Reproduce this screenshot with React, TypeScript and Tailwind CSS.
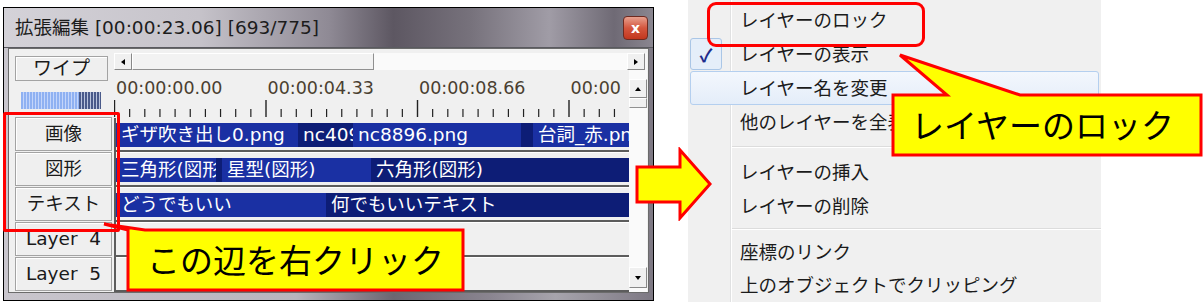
import React from 'react';

const jp = "font-['DejaVu_Sans','Noto_Sans_CJK_JP',sans-serif]";
const jpOnly = "font-['Noto_Sans_CJK_JP','Noto_Sans',sans-serif]";

type Clip = { w: number; label: string; dark?: boolean };

const tracks: Clip[][] = [
  [
    { w: 182, label: 'ギザ吹き出し0.png' },
    { w: 55, label: 'nc4096.png', dark: true },
    { w: 168, label: 'nc8896.png' },
    { w: 12, label: '', dark: true },
    { w: 98, label: '台詞_赤.png' },
  ],
  [
    { w: 100, label: '三角形(図形)' },
    { w: 6, label: '', dark: true },
    { w: 149, label: '星型(図形)' },
    { w: 260, label: '六角形(図形)', dark: true },
  ],
  [
    { w: 210, label: 'どうでもいい' },
    { w: 305, label: '何でもいいテキスト', dark: true },
  ],
  [],
  [],
];

const layerNames = ['画像', '図形', 'テキスト', 'Layer  4', 'Layer  5'];
const rulerLabels = ['00:00:00.00', '00:00:04.33', '00:00:08.66', '00:00:12.99'];

function Arrow({ dir }: { dir: 'left' | 'right' | 'up' | 'down' }) {
  const pts = {
    left: '6,1 2,4 6,7',
    right: '2,1 6,4 2,7',
    up: '1,6 4,2 7,6',
    down: '1,2 4,6 7,2',
  }[dir];
  return (
    <svg width="8" height="8" viewBox="0 0 8 8">
      <polygon points={pts} fill="#000" />
    </svg>
  );
}

function ScrollButton({ dir, className = '' }: { dir: 'left' | 'right' | 'up' | 'down'; className?: string }) {
  return (
    <div
      className={`flex items-center justify-center bg-[#f0f0f0] border border-t-white border-l-white border-r-[#888] border-b-[#888] ${className}`}
    >
      <Arrow dir={dir} />
    </div>
  );
}

function Ruler() {
  const ticks: React.ReactNode[] = [];
  for (let i = 0; i <= 34; i++) {
    const x = 0.5 + i * 15.15;
    const major = i % 10 === 0;
    ticks.push(<line key={i} x1={x} x2={x} y1={major ? 0 : 9} y2={17} stroke="#222" strokeWidth={major ? 1.4 : 1.2} />);
  }
  return (
    <div className="h-[48px] flex flex-col">
      <div className="flex mt-[7px] h-[23px] w-[507px] pl-[2px] overflow-hidden">
        {rulerLabels.map((t) => (
          <div key={t} className="w-[151.5px] shrink-0 text-[17.5px] leading-[23px] text-[#4a3f30] whitespace-nowrap">
            {t}
          </div>
        ))}
      </div>
      <svg width="515" height="18" className="block">
        {ticks}
      </svg>
    </div>
  );
}

function TrackRow({ clips }: { clips: Clip[] }) {
  return (
    <div className="h-[35px] flex flex-col">
      <div className="mt-[5px] h-[24px] flex overflow-hidden">
        {clips.map((c, i) => (
          <div
            key={i}
            style={{ width: c.w }}
            className={`shrink-0 h-full overflow-hidden whitespace-nowrap pl-[5px] text-[18.5px] leading-[24px] text-white ${
              c.dark ? 'bg-[#0d1d76]' : 'bg-[#1a30a3]'
            }`}
          >
            {c.label}
          </div>
        ))}
      </div>
      <div className="mt-auto h-[2px] bg-[#5c5c5c]" />
      <div className="h-px bg-white" />
    </div>
  );
}

function LayerButton({ name }: { name: string }) {
  return (
    <div className="h-[34px] mb-px w-[97px] flex items-center justify-center bg-[#efefef] border border-[#a3a3a3] shadow-[inset_1px_1px_0_#fff] text-[18.5px] text-[#1a1a1a] whitespace-pre">
      {name}
    </div>
  );
}

function EditWindow() {
  return (
    <div className="mt-[7px] ml-[3px] w-[651px] h-[294px] shrink-0 border border-black flex flex-col bg-[linear-gradient(90deg,#c9c6cd_0%,#b8b4bd_45%,#6c6671_60%,#8a8590_75%,#a7a4ac_85%,#7d7883_100%)]">
      <div className="h-[39px] flex items-center pl-[11px] pr-[5px] bg-[linear-gradient(90deg,#d4d2d8_0%,#c6c3ca_30%,#8f8a95_50%,#5d5762_60%,#77727c_72%,#a09ca6_84%,#6f6a75_94%,#8a8690_100%)]">
        <span className="text-[18.5px] text-[#1c1c1c] whitespace-nowrap">拡張編集 [00:00:23.06] [693/775]</span>
        <div className="ml-auto w-[25px] h-[24px] rounded-[4px] border border-[#6e2a20] bg-[linear-gradient(#e8a08e,#d4563e_50%,#c2371f)] flex items-center justify-center text-white text-[14px] font-bold leading-none">
          x
        </div>
      </div>
      <div className="h-px bg-[#5a5a60]" />
      <div className="flex-1 flex px-[4px] pb-[7px] min-h-0">
        <div className="flex-1 flex bg-[#f0f0f0] border border-[#6b6b6b] overflow-hidden">
          <div className="w-[105px] shrink-0 pl-[6px] flex flex-col">
            <div className="mt-[7px] h-[25px] w-[93px] flex items-center justify-center bg-[#efefef] border border-[#a3a3a3] shadow-[inset_1px_1px_0_#fff] text-[19px] text-[#1a1a1a]">
              ワイプ
            </div>
            <div className="mt-[11px] ml-[6px] h-[18px] w-[80px] flex">
              <div className="w-[58px] bg-[repeating-linear-gradient(90deg,#8fb1f2_0_2px,#c4d5fa_2px_3px)]" />
              <div className="w-[22px] bg-[repeating-linear-gradient(90deg,#4a5a8a_0_2px,#b9c3dc_2px_3px)]" />
            </div>
            <div className="mt-[8px] flex flex-col">
              {layerNames.map((n) => (
                <LayerButton key={n} name={n} />
              ))}
            </div>
          </div>
          <div className="w-[533px] shrink-0 pt-[4px] flex flex-col">
            <div className="h-[17px] flex bg-[#f6f6f6]">
              <ScrollButton dir="left" className="w-[18px]" />
              <div className="w-[242px] bg-[#f2f2f2] border border-t-white border-l-white border-r-[#909090] border-b-[#909090]" />
              <div className="flex-1 bg-[#fafafa]" />
              <ScrollButton dir="right" className="w-[18px] mr-[2px]" />
            </div>
            <div className="flex flex-1 min-h-0">
              <div className="w-[515px] shrink-0 flex flex-col">
                <Ruler />
                <div className="border-l-2 border-[#5c5c5c] flex flex-col">
                  {tracks.map((t, i) => (
                    <TrackRow key={i} clips={t} />
                  ))}
                </div>
              </div>
              <div className="w-[18px] shrink-0 flex flex-col pt-[9px] pb-[4px] bg-[#fafafa]">
                <ScrollButton dir="up" className="h-[19px]" />
                <div className="h-[10px] bg-[#f0f0f0] border border-t-white border-l-white border-r-[#909090] border-b-[#909090]" />
                <div className="flex-1" />
                <ScrollButton dir="down" className="h-[21px]" />
              </div>
            </div>
          </div>
        </div>
      </div>
    </div>
  );
}

type Item = { label: string; checked?: boolean; hover?: boolean; sep?: number; h?: number };

const items: Item[] = [
  { label: 'レイヤーのロック' },
  { label: 'レイヤーの表示', checked: true },
  { label: 'レイヤー名を変更', hover: true },
  { label: '他のレイヤーを全表示' },
  { label: '', sep: 16 },
  { label: 'レイヤーの挿入' },
  { label: 'レイヤーの削除' },
  { label: '', sep: 12 },
  { label: '座標のリンク', h: 33 },
  { label: '上のオブジェクトでクリッピング', h: 33 },
];

function ContextMenu() {
  return (
    <div className={`ml-[34px] w-[413px] h-[302px] shrink-0 pt-[3px] bg-[#f0f0f0] bg-[linear-gradient(90deg,transparent_42px,#e0e1e2_42px,#e0e1e2_43px,#ffffff_43px,#ffffff_44px,transparent_44px)] text-[18.5px] text-[#1b1b1b] ${jpOnly}`}>
      {items.map((it, i) => {
        if (it.sep) {
          return (
            <div key={i} style={{ height: it.sep }} className="flex flex-col justify-center pl-[44px]">
              <div className="h-px bg-[#dcdcdc]" />
              <div className="h-px bg-white" />
            </div>
          );
        }
        if (it.hover) {
          return (
            <div
              key={i}
              className="h-[34px] mx-[2px] flex items-center border border-[#b4cfef] rounded-[3px] bg-[linear-gradient(#f3f7fd,#e4edf9)]"
            >
              <div className="w-[31px]" />
              <span className="ml-[18px] whitespace-nowrap">{it.label}</span>
            </div>
          );
        }
        return (
          <div key={i} style={{ height: it.h ?? 34 }} className="px-[2px] flex items-center">
            <div className="w-[32px] h-[32px] flex items-center justify-center">
              {it.checked && (
                <div className="w-[32px] h-[32px] rounded-[3px] border border-[#aac6e6] bg-[#e5eef9] flex items-center justify-center text-[#1d2c8c] text-[18px] font-bold">
                  ✓
                </div>
              )}
            </div>
            <span className="ml-[18px] whitespace-nowrap">{it.label}</span>
          </div>
        );
      })}
    </div>
  );
}

export default function App() {
  return (
    <div className={`relative w-[1204px] h-[307px] bg-white flex items-start overflow-hidden ${jp}`}>
      <EditWindow />
      <ContextMenu />

      {/* red frame around the layer buttons */}
      <div className="absolute left-[3px] top-[112px] w-[117px] h-[120px] border-[3px] border-[#ff0000] rounded-[2px]" />

      {/* left callout */}
      <div className={`absolute left-[100px] top-[220px] w-[366px] h-[72px] ${jpOnly}`}>
        <svg width="366" height="72" className="absolute inset-0">
          <path d="M28 10 L4 4 L45 10 L363 10 L363 70 L28 70 Z" fill="#ffff00" stroke="#ff0000" strokeWidth="3" strokeLinejoin="miter" />
        </svg>
        <div className="absolute left-[47px] top-[10px] h-[60px] flex items-center text-[33px] text-black whitespace-nowrap">
          この辺を右クリック
        </div>
      </div>

      {/* yellow arrow */}
      <svg width="80" height="74" className="absolute left-[634px] top-[147px]">
        <polygon points="3,20 46,20 46,3 76,37 46,71 46,55 3,55" fill="#ffff00" stroke="#ff0000" strokeWidth="3" />
      </svg>

      {/* red frame around the menu item */}
      <div className="absolute left-[707px] top-[2px] w-[218px] h-[45px] border-[3px] border-[#ff0000] rounded-[9px]" />

      {/* right callout */}
      <div className={`absolute left-[890px] top-[50px] w-[314px] h-[108px] ${jpOnly}`}>
        <svg width="314" height="108" className="absolute inset-0">
          <path d="M3 45 L57 45 L10 5 L130 45 L311 45 L311 105 L3 105 Z" fill="#ffff00" stroke="#ff0000" strokeWidth="3" />
        </svg>
        <div className="absolute left-[21px] top-[45px] h-[60px] flex items-center text-[33px] text-black whitespace-nowrap">
          レイヤーのロック
        </div>
      </div>
    </div>
  );
}
